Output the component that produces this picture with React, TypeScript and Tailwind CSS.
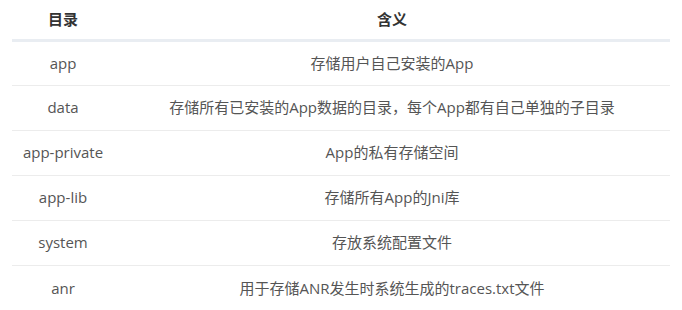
const rows: [string, string][] = [
  ["app", "存储用户自己安装的App"],
  ["data", "存储所有已安装的App数据的目录，每个App都有自己单独的子目录"],
  ["app-private", "App的私有存储空间"],
  ["app-lib", "存储所有App的Jni库"],
  ["system", "存放系统配置文件"],
  ["anr", "用于存储ANR发生时系统生成的traces.txt文件"],
];

export default function App() {
  return (
    <div
      className="w-[682px] h-[310px] bg-white px-[12px] overflow-hidden"
      style={{ fontFamily: '"Open Sans", "Noto Sans CJK SC", sans-serif' }}
    >
      <table className="w-[658px] border-collapse text-[15px]">
        <thead>
          <tr className="border-b-[3px] border-[#e9edf2]">
            <th className="w-[102px] h-[40px] p-0 font-bold text-[#333] text-center align-middle">
              目录
            </th>
            <th className="h-[40px] p-0 font-bold text-[#333] text-center align-middle">
              含义
            </th>
          </tr>
        </thead>
        <tbody>
          {rows.map(([dir, desc], i) => (
            <tr
              key={dir}
              className={i < rows.length - 1 ? "border-b border-[#ececec]" : ""}
            >
              <td className="h-[45px] p-0 text-center align-middle text-[#555]">
                {dir}
              </td>
              <td className="h-[45px] p-0 text-center align-middle text-[#555]">
                {desc}
              </td>
            </tr>
          ))}
        </tbody>
      </table>
    </div>
  );
}
